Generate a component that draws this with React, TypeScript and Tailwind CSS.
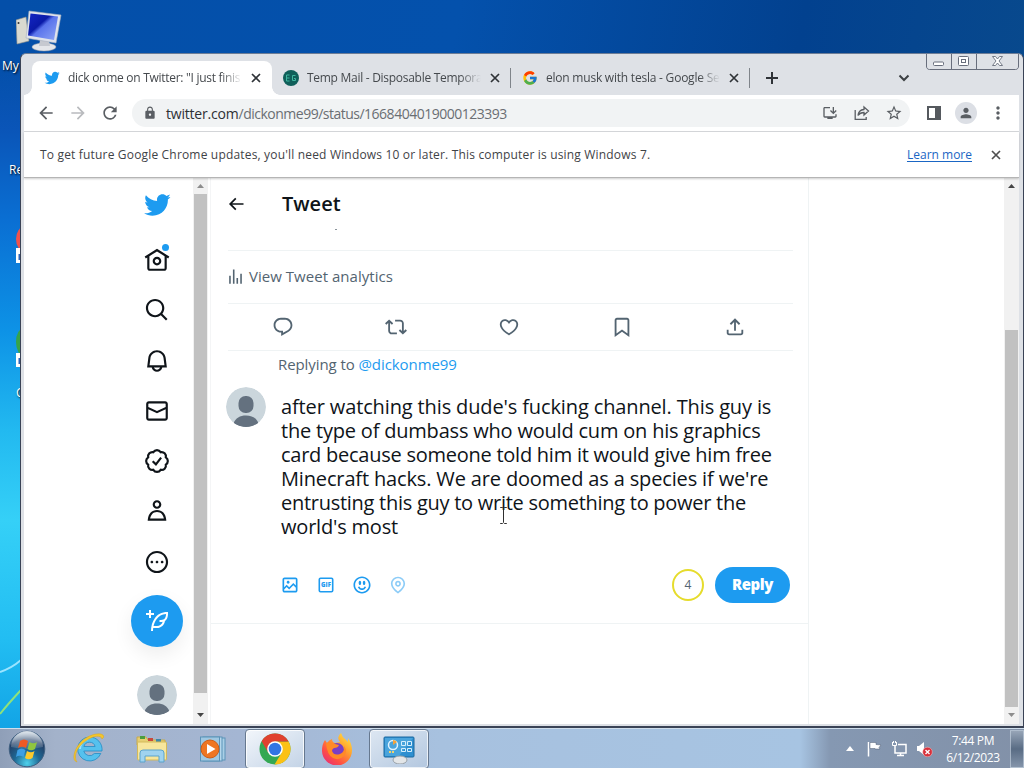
import React from "react";
import {
  MdArrowBack,
  MdArrowForward,
  MdRefresh,
  MdLock,
  MdInstallDesktop,
  MdStarBorder,
  MdPerson,
  MdMoreVert,
} from "react-icons/md";
import { FcGoogle } from "react-icons/fc";

const P = {
  bird: "M23.643 4.937c-.835.37-1.732.62-2.675.733.962-.576 1.7-1.49 2.048-2.578-.9.534-1.897.922-2.958 1.13-.85-.904-2.06-1.47-3.4-1.47-2.572 0-4.658 2.086-4.658 4.66 0 .364.042.718.12 1.06-3.873-.195-7.304-2.05-9.602-4.868-.4.69-.63 1.49-.63 2.342 0 1.616.823 3.043 2.072 3.878-.764-.025-1.482-.234-2.11-.583v.06c0 2.257 1.605 4.14 3.737 4.568-.392.106-.803.162-1.227.162-.3 0-.593-.028-.877-.082.593 1.85 2.313 3.198 4.352 3.234-1.595 1.25-3.604 1.995-5.786 1.995-.376 0-.747-.022-1.112-.065 2.062 1.323 4.51 2.093 7.14 2.093 8.57 0 13.255-7.098 13.255-13.254 0-.2-.005-.402-.014-.602.91-.658 1.7-1.477 2.323-2.41z",
  home: "M12 9c-2.209 0-4 1.791-4 4s1.791 4 4 4 4-1.791 4-4-1.791-4-4-4zm0 6c-1.105 0-2-.895-2-2s.895-2 2-2 2 .895 2 2-.895 2-2 2zm0-13.304L.622 8.807l1.06 1.696L3 9.679V19.5C3 20.881 4.119 22 5.5 22h13c1.381 0 2.5-1.119 2.5-2.5V9.679l1.318.824 1.06-1.696L12 1.696zM19 19.5c0 .276-.224.5-.5.5h-13c-.276 0-.5-.224-.5-.5V8.429l7-4.375 7 4.375V19.5z",
  search: "M10.25 3.75c-3.59 0-6.5 2.91-6.5 6.5s2.91 6.5 6.5 6.5c1.795 0 3.419-.726 4.596-1.904 1.178-1.177 1.904-2.801 1.904-4.596 0-3.59-2.91-6.5-6.5-6.5zm-8.5 6.5c0-4.694 3.806-8.5 8.5-8.5s8.5 3.806 8.5 8.5c0 1.986-.682 3.815-1.824 5.262l4.781 4.781-1.414 1.414-4.781-4.781c-1.447 1.142-3.276 1.824-5.262 1.824-4.694 0-8.5-3.806-8.5-8.5z",
  bell: "M19.993 9.042C19.48 5.017 16.054 2 11.996 2s-7.49 3.021-7.999 7.051L2.866 18H7.1c.463 2.282 2.481 4 4.9 4s4.437-1.718 4.9-4h4.236l-1.143-8.958zM12 20c-1.306 0-2.417-.835-2.829-2h5.658c-.412 1.165-1.523 2-2.829 2zm-6.866-4l.847-6.698C6.364 6.272 8.941 4 11.996 4s5.627 2.268 6.013 5.295L18.864 16H5.134z",
  mail: "M1.998 5.5c0-1.381 1.119-2.5 2.5-2.5h15c1.381 0 2.5 1.119 2.5 2.5v13c0 1.381-1.119 2.5-2.5 2.5h-15c-1.381 0-2.5-1.119-2.5-2.5v-13zm2.5-.5c-.276 0-.5.224-.5.5v2.764l8 3.638 8-3.636V5.5c0-.276-.224-.5-.5-.5h-15zm15.5 5.463l-8 3.636-8-3.638V18.5c0 .276.224.5.5.5h15c.276 0 .5-.224.5-.5v-8.037z",
  person: "M5.651 19h12.698c-.337-1.8-1.023-3.21-1.945-4.19C15.318 13.65 13.838 13 12 13s-3.317.65-4.404 1.81c-.922.98-1.608 2.39-1.945 4.19zm.486-5.56C7.627 11.85 9.648 11 12 11s4.373.85 5.863 2.44c1.477 1.58 2.366 3.8 2.632 6.46l.11 1.1H3.395l.11-1.1c.266-2.66 1.155-4.88 2.632-6.46zM12 4c-1.105 0-2 .9-2 2s.895 2 2 2 2-.9 2-2-.895-2-2-2zM8 6c0-2.21 1.791-4 4-4s4 1.79 4 4-1.791 4-4 4-4-1.79-4-4z",
  more: "M3.75 12c0-4.56 3.69-8.25 8.25-8.25s8.25 3.69 8.25 8.25-3.69 8.25-8.25 8.25S3.75 16.56 3.75 12zM12 1.75C6.34 1.75 1.75 6.34 1.75 12S6.34 22.25 12 22.25 22.25 17.66 22.25 12 17.66 1.75 12 1.75zm-4.75 11.5c.69 0 1.25-.56 1.25-1.25s-.56-1.25-1.25-1.25S6 11.31 6 12s.56 1.25 1.25 1.25zm9.5 0c.69 0 1.25-.56 1.25-1.25s-.56-1.25-1.25-1.25-1.25.56-1.25 1.25.56 1.25 1.25 1.25zM13.25 12c0 .69-.56 1.25-1.25 1.25s-1.25-.56-1.25-1.25.56-1.25 1.25-1.25 1.25.56 1.25 1.25z",
  compose: "M23 3c-6.62-.1-10.38 2.421-13.05 6.03C7.29 12.61 6 17.331 6 22h2c0-1.007.07-2.012.19-3H12c4.1 0 7.48-3.082 7.94-7.054C22.79 10.147 23.17 6.359 23 3zm-7 8h-1.5v2H16c.63-.016 1.2-.08 1.72-.188C16.95 15.24 14.68 17 12 17H8.55c.57-2.512 1.57-4.851 3-6.78 2.16-2.912 5.29-4.911 9.45-5.187C20.95 8.079 19.9 11 16 11zM4 9V6H1V4h3V1h2v3h3v2H6v3H4z",
  reply: "M1.751 10c0-4.42 3.584-8 8.005-8h4.366c4.49 0 8.129 3.64 8.129 8.13 0 2.96-1.607 5.68-4.196 7.11l-8.054 4.46v-3.69h-.067c-4.49.1-8.183-3.51-8.183-8.01zm8.005-6c-3.317 0-6.005 2.69-6.005 6 0 3.37 2.77 6.08 6.138 6.01l.351-.01h1.761v2.3l5.087-2.81c1.951-1.08 3.163-3.13 3.163-5.36 0-3.39-2.744-6.13-6.129-6.13H9.756z",
  retweet: "M4.5 3.88l4.432 4.14-1.364 1.46L5.5 7.55V16c0 1.1.896 2 2 2H13v2H7.5c-2.209 0-4-1.79-4-4V7.55L1.432 9.48.068 8.02 4.5 3.88zM16.5 6H11V4h5.5c2.209 0 4 1.79 4 4v8.45l2.068-1.93 1.364 1.46-4.432 4.14-4.432-4.14 1.364-1.46 2.068 1.93V8c0-1.1-.896-2-2-2z",
  like: "M16.697 5.5c-1.222-.06-2.679.51-3.89 2.16l-.805 1.09-.806-1.09C9.984 6.01 8.526 5.44 7.304 5.5c-1.243.07-2.349.78-2.91 1.91-.552 1.12-.633 2.78.479 4.82 1.074 1.97 3.257 4.27 7.129 6.61 3.87-2.34 6.052-4.64 7.126-6.61 1.111-2.04 1.03-3.7.477-4.82-.561-1.13-1.666-1.84-2.908-1.91zm4.187 7.69c-1.351 2.48-4.001 5.12-8.379 7.67l-.503.3-.504-.3c-4.379-2.55-7.029-5.19-8.382-7.67-1.36-2.5-1.41-4.86-.514-6.67.887-1.79 2.647-2.91 4.601-3.01 1.651-.09 3.368.56 4.798 2.01 1.429-1.45 3.146-2.1 4.796-2.01 1.954.1 3.714 1.22 4.601 3.01.896 1.81.846 4.17-.514 6.67z",
  bookmark: "M4 4.5C4 3.12 5.119 2 6.5 2h11C18.881 2 20 3.12 20 4.5v18.44l-8-5.71-8 5.71V4.5zM6.5 4c-.276 0-.5.22-.5.5v14.56l6-4.29 6 4.29V4.5c0-.28-.224-.5-.5-.5h-11z",
  share: "M12 2.59l5.7 5.7-1.41 1.42L13 6.41V16h-2V6.41l-3.3 3.3-1.41-1.42L12 2.59zM21 15l-.02 3.51c0 1.38-1.12 2.49-2.5 2.49H5.5C4.11 21 3 19.88 3 18.5V15h2v3.5c0 .28.22.5.5.5h12.98c.28 0 .5-.22.5-.5L19 15h2z",
  back: "M7.414 13l5.043 5.04-1.414 1.42L3.586 12l7.457-7.46 1.414 1.42L7.414 11H21v2H7.414z",
  analytics: "M8.75 21V3h2v18h-2zM18 21V8.5h2V21h-2zM4 21l.004-10h2L6 21H4zm9.248 0v-7h2v7h-2z",
  media: "M3 5.5C3 4.119 4.119 3 5.5 3h13C19.881 3 21 4.119 21 5.5v13c0 1.381-1.119 2.5-2.5 2.5h-13C4.119 21 3 19.881 3 18.5v-13zM5.5 5c-.276 0-.5.224-.5.5v9.086l3-3 3 3 5-5 3 3V5.5c0-.276-.224-.5-.5-.5h-13zM19 15.414l-3-3-5 5-3-3-3 3V18.5c0 .276.224.5.5.5h13c.276 0 .5-.224.5-.5v-3.086zM9.75 7C8.784 7 8 7.784 8 8.75s.784 1.75 1.75 1.75 1.75-.784 1.75-1.75S10.716 7 9.75 7z",
  emoji: "M8 9.5C8 8.119 8.672 7 9.5 7S11 8.119 11 9.5 10.328 12 9.5 12 8 10.881 8 9.5zm6.5 2.5c.828 0 1.5-1.119 1.5-2.5S15.328 7 14.5 7 13 8.119 13 9.5s.672 2.5 1.5 2.5zM12 16c-2.224 0-3.021-2.227-3.051-2.316l-1.897.633c.05.15 1.271 3.684 4.949 3.684s4.898-3.533 4.949-3.684l-1.896-.638c-.033.095-.83 2.322-3.053 2.322zm10.25-4.001c0 5.652-4.598 10.25-10.25 10.25S1.75 17.652 1.75 12 6.348 1.75 12 1.75 22.25 6.348 22.25 12zm-2 0c0-4.549-3.701-8.25-8.25-8.25S3.75 7.451 3.75 12s3.701 8.25 8.25 8.25 8.25-3.701 8.25-8.25z",
  location: "M12 7c-1.93 0-3.5 1.57-3.5 3.5S10.07 14 12 14s3.5-1.57 3.5-3.5S13.93 7 12 7zm0 5c-.827 0-1.5-.673-1.5-1.5S11.173 9 12 9s1.5.673 1.5 1.5S12.827 12 12 12zm0-10c-4.687 0-8.5 3.813-8.5 8.5 0 5.967 7.621 11.116 7.945 11.332l.555.37.555-.37c.324-.216 7.945-5.365 7.945-11.332C20.5 5.813 16.687 2 12 2zm0 17.77c-1.665-1.241-6.5-5.196-6.5-9.27C5.5 6.916 8.416 4 12 4s6.5 2.916 6.5 6.5c0 4.073-4.835 8.028-6.5 9.27z",
};

const segoe = "font-['Open_Sans','Noto_Sans',sans-serif]";

function Glyph({ d, className }: { d: string; className: string }) {
  return (
    <svg viewBox="0 0 24 24" fill="currentColor" className={className}>
      <path d={d} />
    </svg>
  );
}

function Cross({ className }: { className: string }) {
  return (
    <svg viewBox="0 0 14 14" fill="none" stroke="currentColor" strokeWidth="1.700" className={className}>
      <path d="M3 3l8 8M11 3l-8 8" />
    </svg>
  );
}

function Avatar() {
  return (
    <svg viewBox="0 0 40 40" className="size-10 shrink-0 rounded-full">
      <circle cx="20" cy="20" r="20" fill="#cbd6dc" />
      <rect x="12.5" y="9" width="15" height="17" rx="7" fill="#64717f" />
      <path d="M7.5 36.5C9.500 31 14 28.500 20 28.500s10.500 2.500 12.500 8A20 20 0 0 1 20 40a20 20 0 0 1-12.500-3.500z" fill="#64717f" />
    </svg>
  );
}

function Tab({ icon, title, active, titleClass }: { icon: React.ReactNode; title: string; active?: boolean; titleClass: string }) {
  return (
    <div className={active ? "relative flex h-[34px] w-[240px] items-center rounded-t-lg bg-white pl-3" : "flex h-[34px] w-[239px] items-center pl-[11px]"}>
      {icon}
      <div className={"ml-2 h-5 w-[174px] overflow-hidden text-[12px] leading-5 whitespace-nowrap text-[#45494d] [mask-image:linear-gradient(to_right,black_88%,transparent_100%)] " + titleClass}>{title}</div>
      <Cross className="ml-[7px] size-[14px] text-[#2f3337]" />
      {active && (
        <>
          <div className="absolute bottom-0 -left-2 size-2 bg-[radial-gradient(circle_at_top_left,transparent_7.500px,white_8px)]" />
          <div className="absolute right-[-8px] bottom-0 size-2 bg-[radial-gradient(circle_at_top_right,transparent_7.500px,white_8px)]" />
        </>
      )}
    </div>
  );
}

function CaptionButtons() {
  return (
    <svg viewBox="0 0 93 17" className="absolute top-[-1px] right-1 h-[17px] w-[93px]" fill="none" stroke="#686e7c">
      <path d="M.5 0v13a3 3 0 0 0 3 3.500h86a3 3 0 0 0 3-3.500V0M25.500 0v16M50.500 0v16" />
      <rect x="7.500" y="9" width="10" height="3.500" rx="1" fill="#fff" />
      <rect x="32.500" y="3.500" width="10" height="9" rx="1" fill="#fff" />
      <rect x="35.500" y="6.500" width="4" height="3" />
      <path d="M66.500 3.500h3l2 2.500 2-2.500h3l-3.500 4.500 3.500 4.500h-3l-2-2.500-2 2.500h-3l3.500-4.500z" fill="#fff" strokeWidth=".9" />
    </svg>
  );
}

function Arrow({ up, dim }: { up?: boolean; dim?: boolean }) {
  return (
    <svg viewBox="0 0 7 4" className="h-1 w-[7px]">
      <path d={up ? "M0 4L3.500 0 7 4z" : "M0 0h7L3.500 4z"} fill={dim ? "#8d8d8d" : "#454545"} />
    </svg>
  );
}

function NavItem({ children }: { children: React.ReactNode }) {
  return <div className="relative flex h-[50.25px] w-[53px] items-center justify-center pr-px">{children}</div>;
}

function Sidebar() {
  return (
    <nav className="flex w-[169px] shrink-0 flex-col items-end pr-[9.5px] text-[#0f1419]">
      <div className="flex h-[57px] w-[53px] items-center justify-center pb-1">
        <Glyph d={P.bird} className="size-7 text-[#1d9bf0]" />
      </div>
      <NavItem>
        <Glyph d={P.home} className="size-[26px]" />
        <span className="absolute top-[9px] right-[15px] size-[7px] rounded-full bg-[#1d9bf0]" />
      </NavItem>
      <NavItem><Glyph d={P.search} className="size-[26px]" /></NavItem>
      <NavItem><Glyph d={P.bell} className="size-[26px]" /></NavItem>
      <NavItem><Glyph d={P.mail} className="size-[26px]" /></NavItem>
      <NavItem>
        <svg viewBox="0 0 24 24" className="size-[26px]" fill="none" stroke="currentColor" strokeWidth="2">
          <path d="M3.850 8.620a4 4 0 0 1 4.780-4.770 4 4 0 0 1 6.740 0 4 4 0 0 1 4.780 4.780 4 4 0 0 1 0 6.740 4 4 0 0 1-4.770 4.780 4 4 0 0 1-6.750 0 4 4 0 0 1-4.780-4.770 4 4 0 0 1 0-6.760z" />
          <path d="M8 12.200l3 2.900 4.800-6.200" />
        </svg>
      </NavItem>
      <NavItem><Glyph d={P.person} className="size-[26px]" /></NavItem>
      <NavItem><Glyph d={P.more} className="size-[26px]" /></NavItem>
      <div className="mt-2 mr-[0.5px] flex size-[52px] items-center justify-center rounded-full bg-[#1d9bf0] text-white shadow-[0_8px_20px_rgba(0,0,0,0.07)]">
        <Glyph d={P.compose} className="size-6" />
      </div>
      <div className="mt-7 mr-[0.5px] flex w-[53px] justify-center"><Avatar /></div>
    </nav>
  );
}

function TweetColumn() {
  return (
    <section className="flex w-[598px] shrink-0 flex-col border-r border-[#eff3f4] text-[#536471]">
      <header className="flex h-[51px] items-center pl-[15px] text-[#0f1419]">
        <Glyph d={P.back} className="size-5" />
        <h1 className="ml-[36px] text-[20px] leading-6 font-semibold">Tweet</h1>
      </header>
      <div className="ml-[124px] h-px w-0.5 bg-[#8a949b]" />
      <div className="mt-5 mr-[15px] ml-[17px] flex h-[54px] items-center border-t border-b border-[#eff3f4] pb-0.5">
        <Glyph d={P.analytics} className="-ml-0.5 size-[19px]" />
        <span className="ml-1 text-[15px] tracking-[0.03px]">View Tweet analytics</span>
      </div>
      <div className="mr-[15px] ml-[17px] flex h-[47px] items-center border-b border-[#eff3f4]">
        <div className="-ml-0.5 flex w-full shrink-0 items-center justify-around">
          <Glyph d={P.reply} className="size-[22px]" />
          <Glyph d={P.retweet} className="size-[22px]" />
          <Glyph d={P.like} className="size-[22px]" />
          <Glyph d={P.bookmark} className="size-[22px]" />
          <Glyph d={P.share} className="size-[22px]" />
        </div>
      </div>
      <p className="mt-[3px] ml-[67px] text-[15px] leading-5 tracking-[-0.08px]">
        Replying to <span className="text-[#1d9bf0]">@dickonme99</span>
      </p>
      <div className="mt-[13px] ml-[15px] flex">
        <Avatar />
        <div className="mt-2 ml-[15px] text-[20px] leading-6 whitespace-nowrap text-[#0f1419]">
          <div className="tracking-[-0.13px]">after watching this dude's fucking channel. This guy is</div>
          <div className="tracking-[-0.2px]">the type of dumbass who would cum on his graphics</div>
          <div className="tracking-[-0.25px]">card because someone told him it would give him free</div>
          <div className="tracking-[-0.15px]">Minecraft hacks. We are doomed as a species if we're</div>
          <div className="tracking-[-0.27px]">entrusting this guy to write something to power the</div>
          <div className="tracking-[-0.2px]">world's most</div>
        </div>
      </div>
      <div className="mt-[28px] flex h-9 items-center pr-[18px] pl-[69px] text-[#1d9bf0]">
        <div className="flex gap-4">
          <Glyph d={P.media} className="size-5" />
          <svg viewBox="0 0 20 20" className="size-5">
            <rect x="3.300" y="3.300" width="13.400" height="13.400" rx="1.200" fill="none" stroke="currentColor" strokeWidth="1.600" />
            <text x="10" y="12.200" textAnchor="middle" fontSize="6" fontWeight="800" fill="currentColor">GIF</text>
          </svg>
          <Glyph d={P.emoji} className="size-5" />
          <Glyph d={P.location} className="size-5 opacity-50" />
        </div>
        <div className="ml-auto flex size-8 items-center justify-center rounded-full border-2 border-[#e6dc2c] text-[12px] text-[#536471]">4</div>
        <button className="ml-[11px] h-9 w-[75px] rounded-full bg-[#1d9bf0] pb-0.5 text-[15px] font-extrabold tracking-[-0.4px] text-white">Reply</button>
      </div>
      <div className="mt-5 border-t border-[#eff3f4]" />
    </section>
  );
}

function TaskIcons() {
  return (
    <div className="flex items-center">
      <div className="flex w-[54px] justify-center">
        <svg viewBox="0 0 38 38" className="size-[38px]">
          <defs>
            <radialGradient id="orb" cx=".5" cy=".9" r=".9"><stop offset="0" stopColor="#4ed1ec" /><stop offset=".4" stopColor="#1e6894" /><stop offset=".75" stopColor="#233f66" /><stop offset="1" stopColor="#8ba7bf" /></radialGradient>
            <linearGradient id="shine" x2="0" y2="1"><stop offset="0" stopColor="#fff" stopOpacity=".75" /><stop offset="1" stopColor="#fff" stopOpacity=".1" /></linearGradient>
          </defs>
          <circle cx="19" cy="19" r="17.800" fill="url(#orb)" stroke="#3f5f80" />
          <path d="M3 17A16 16 0 0 1 35 17Q19 21 3 17z" fill="url(#shine)" />
          <path d="M12 11q4-3 8 0l-2 7q-4-2.500-8 0z" fill="#ee5a24" />
          <path d="M21.500 12q4 2.500 7.500 0l-2 7q-4 2.500-7.500 0z" fill="#8fc63f" />
          <path d="M9.500 20q4-3 8 0l-2 7q-4-2.500-7.500 0z" fill="#3d9fe4" />
          <path d="M19 21q4 2.500 7.500 0l-2 7q-4 2.500-7.500 0z" fill="#fcc92c" />
        </svg>
      </div>
      <div className="ml-[19px] flex w-8 justify-center">
        <svg viewBox="0 0 32 32" className="size-8">
          <path d="M16.500 4a12 12 0 1 0 11.300 16.500h-6.500a6 6 0 0 1-10.500-2.500H29A12.500 12.500 0 0 0 16.500 4zm-5.600 9.500a5.800 5.800 0 0 1 11.200 0z" fill="#55c1ee" stroke="#238bc4" strokeWidth=".8" />
          <path d="M15 6a10 10 0 0 0-8 10" fill="none" stroke="#9be2fa" strokeWidth="2" />
          <path d="M29 6C28 1 18 3 10 10S1 25 4 29C-1 28 0 18 7 10S26-1 30 2q2 2-1 4z" fill="#f4c62d" stroke="#d8a51c" strokeWidth=".5" />
        </svg>
      </div>
      <div className="ml-[31px] flex w-8 justify-center">
        <svg viewBox="0 0 32 32" className="size-8">
          <path d="M1 4h9l2 3h17v5H1z" fill="#e6cf72" stroke="#c7aa4d" />
          <path d="M4 3h5v3H4z" fill="#4b9d3f" /><path d="M12 5h5v3h-5z" fill="#c9483a" /><path d="M20 6h5v3h-5z" fill="#3d87a8" />
          <rect x="1.500" y="9" width="29" height="18" rx="1" fill="#f7e69c" stroke="#d3b95a" />
          <path d="M4 29V20q0-3 3-3h18q3 0 3 3v9h-5v-6H9v6z" fill="#9fd3ef" stroke="#5ba3cc" />
        </svg>
      </div>
      <div className="ml-[29px] flex w-8 justify-center">
        <svg viewBox="0 0 32 32" className="size-8">
          <rect x="9" y="5" width="19" height="22" fill="#a9cfe6" stroke="#5b93b8" />
          <rect x="6" y="4" width="19" height="24" fill="#b6d8ec" stroke="#5b93b8" />
          <rect x="3.500" y="4" width="19" height="24" fill="#9fc8e2" stroke="#5b93b8" />
          <circle cx="13" cy="16" r="9" fill="#ee7623" stroke="#cf5c14" />
          <path d="M10 11l8.500 5-8.500 5z" fill="#fff" />
        </svg>
      </div>
      <div className="ml-4 flex h-10 w-[60px] items-center justify-center rounded-sm border border-[#66788f] bg-linear-to-br from-[#f2f6fb] to-[#c3d3e6] shadow-[inset_0_0_0_1px_rgba(255,255,255,0.8)]">
        <svg viewBox="0 0 32 32" className="size-8">
          <circle cx="16" cy="16" r="15.500" fill="#34a853" />
          <path d="M16 8.500h13.600A15.500 15.500 0 0 1 15.500 31.500L22.500 20z" fill="#fbc116" />
          <path d="M2.600 8.200A15.500 15.500 0 0 1 29.600 8.500H16L9.500 20z" fill="#e0412f" />
          <circle cx="16" cy="16" r="7.800" fill="#fff" />
          <circle cx="16" cy="16" r="6.300" fill="#3275e4" />
        </svg>
      </div>
      <div className="ml-4 flex w-8 justify-center">
        <svg viewBox="0 0 32 32" className="size-8">
          <defs>
            <linearGradient id="fox" x1="1" x2=".2" y2="1"><stop offset="0" stopColor="#fff04d" /><stop offset=".4" stopColor="#ffa42e" /><stop offset=".75" stopColor="#ff5044" /><stop offset="1" stopColor="#e82f75" /></linearGradient>
          </defs>
          <path d="M4 7l2 3q2-3 5-4 0 3 3 4l5-1q-4-5 1-9 1 4 5 7l2 2V5q4 6 4 12a15 15 0 0 1-30 1Q1 11 4 7z" fill="url(#fox)" />
          <circle cx="16" cy="17" r="7" fill="#7a3fc4" />
          <path d="M5 10q6-2 9 1l4 1q-1 3-5 3-2 1-2 3 2 5 8 3 5-2 4-8 4 5 0 10-5 5-11 2T5 10z" fill="#ff8a26" />
        </svg>
      </div>
      <div className="ml-4 flex h-10 w-[60px] items-center justify-center rounded-sm border border-[#66788f] bg-linear-to-br from-[#dde7f2] to-[#b3c7df] shadow-[inset_0_0_0_1px_rgba(255,255,255,0.7)]">
        <svg viewBox="0 0 34 30" className="h-[30px] w-[34px]">
          <rect x="2" y="3" width="30" height="20" rx="1" fill="#2e8fd0" stroke="#1b699f" />
          <path d="M3 4h28L17 22H3z" fill="#63b9e8" opacity=".5" />
          <circle cx="11" cy="11" r="4.500" fill="none" stroke="#dff2ff" strokeWidth="1.500" />
          <path d="M11 11V6a5 5 0 0 1 4 2z" fill="#f5a33a" />
          <path d="M19.500 7.500h4v4h-4zM25.500 7.500h4v4h-4zM19.500 14.500h4v3h-4zM25.500 14.500h4v3h-4z" fill="none" stroke="#d4eefc" />
          <path d="M7 18h6" stroke="#f1d36b" strokeWidth="2" strokeDasharray="2 1" />
          <ellipse cx="18" cy="26" rx="7" ry="4" fill="#e3e6e8" stroke="#99a1a8" />
        </svg>
      </div>
    </div>
  );
}

function Taskbar() {
  return (
    <footer className={"relative flex h-10 items-center border-t border-[#cfdeec] bg-[linear-gradient(to_right,#8f9fb8_0px,#a3b2ca_55px,#a4b6d3_240px,#a7c1df_440px,#a7c4e2_800px,#8598b2_830px,#8291a8_1024px)] " + segoe}>
      <TaskIcons />
      <div className="ml-auto flex items-center text-white">
        <svg viewBox="0 0 8 5" className="h-[5px] w-2"><path d="M0 5l4-5 4 5z" fill="#fff" /></svg>
        <svg viewBox="0 0 16 16" className="ml-[13px] size-4">
          <path d="M1.500 1v14.500" stroke="#fff" strokeWidth="1.500" /><path d="M3 1.500h6v2l5 .5-2 2.500 1 1.500H8V7.500H3z" fill="#fff" stroke="#505e74" strokeWidth=".5" />
        </svg>
        <svg viewBox="0 0 16 16" className="ml-2 size-4" fill="none" stroke="#fff">
          <path d="M4 4.500V12h11V3.500H7M9.500 12v2.500M6 14.500h7" strokeWidth="1.500" /><path d="M1.500 1v3.500h4V1M2.500 0v2M4.500 0v2" />
        </svg>
        <svg viewBox="0 0 17 16" className="ml-[9px] h-4 w-[17px]">
          <path d="M1 5h2l5-4v13L3 10H1z" fill="#fff" /><circle cx="11.500" cy="11" r="4.800" fill="#d8303a" stroke="#f6c8ca" strokeWidth=".5" /><path d="M9.500 9l4 4m0-4l-4 4" stroke="#fff" strokeWidth="1.400" />
        </svg>
        <div className="ml-[9px] w-[62px] text-center text-[12px] leading-[17px] tracking-[-0.36px] whitespace-nowrap">
          <div>7:44 PM</div>
          <div>6/12/2023</div>
        </div>
        <div className="ml-[6px] h-[38px] w-[14px] border border-[#c1cddb]/70 bg-linear-to-b from-[#97a5b7] via-[#596c84] to-[#8494aa]" />
      </div>
    </footer>
  );
}

function DesktopIcons() {
  return (
    <div className={"absolute inset-0 text-[12px] text-white [text-shadow:1px_1px_2px_#000] " + segoe}>
      <svg viewBox="0 0 46 42" className="absolute top-[10px] left-4 h-[42px] w-[46px]">
        <defs><linearGradient id="mon" x2="1" y2="1"><stop offset="0" stopColor="#1426c4" /><stop offset=".4" stopColor="#0a1aa8" /><stop offset=".5" stopColor="#5a74ec" /><stop offset="1" stopColor="#8fa6f6" /></linearGradient></defs>
        <path d="M0 10l10-3 3 24-12 3z" fill="#d9d9d0" stroke="#8f8f88" strokeWidth=".6" />
        <circle cx="2.500" cy="13" r="1" fill="#333" />
        <ellipse cx="28" cy="37" rx="12" ry="4" fill="#e4e6ea" stroke="#9aa0a8" strokeWidth=".5" />
        <path d="M24 30h9l1 6h-11z" fill="#c6c9d0" />
        <path d="M13 1l32 4-5 28-30-5z" fill="#dfe3ec" stroke="#a8b0bd" strokeWidth=".6" />
        <path d="M14.500 3.500l27.500 3-4 23.500-26-4.500z" fill="url(#mon)" />
      </svg>
      <div className="absolute top-[57px] left-[2px]">My</div>
      <div className="absolute top-[161px] left-[9px]">Re</div>
      <svg viewBox="0 0 10 175" className="absolute top-[225px] left-3 h-[175px] w-[10px]">
        <ellipse cx="12" cy="14" rx="8" ry="12" fill="#f0524d" />
        <rect x="4" y="23" width="6" height="15" fill="#fff" /><rect x="6.500" y="29" width="3.500" height="6" fill="#2c64b8" />
        <ellipse cx="12" cy="117" rx="8" ry="14" fill="#36a34a" />
        <rect x="4" y="128" width="6" height="14" fill="#fff" /><rect x="6.500" y="133" width="3.500" height="6" fill="#2c64b8" />
      </svg>
      <div className="absolute top-[384px] left-4">C</div>
      <svg viewBox="0 0 21 80" className="absolute bottom-0 left-0 h-20 w-[21px]" fill="none">
        <path d="M0 24Q12 20 21 12" stroke="#9be4ff" strokeWidth="2" />
        <path d="M0 66Q8 56 21 42" stroke="#8fe27a" strokeWidth="2" />
      </svg>
    </div>
  );
}

export default function App() {
  return (
    <div className="flex h-[768px] w-[1024px] flex-col overflow-hidden bg-[#3a4356] font-['Open_Sans','Noto_Sans',sans-serif]">
      <div className="relative h-[728px] bg-[linear-gradient(to_bottom,transparent_60px,#0a55b8_130px,#0a6fd3_220px,#0d92e6_330px,#22b9f0_430px,#35d0f7_520px,#22bdf2_640px,#12a4e6_728px),linear-gradient(100deg,#044fa9_0%,#0451ac_40%,#02418f_70%,#0b4d8c_100%)]">
        <DesktopIcons />
        <main className="absolute top-[53px] left-[20px] flex h-[675px] w-[1004px] flex-col overflow-hidden rounded-t-md border border-b-2 border-[#3a4356] border-t-[#6d7d96] bg-[#dee1e6]">
          <div className="relative flex h-[41px] shrink-0 items-end pl-[11px]">
            <Tab active title={'dick onme on Twitter: "I just finis'} titleClass="tracking-[-0.28px]" icon={<Glyph d={P.bird} className="size-4 text-[#1d9bf0]" />} />
            <Tab title="Temp Mail - Disposable Tempora" titleClass="tracking-[-0.28px]" icon={
              <svg viewBox="0 0 16 16" className="size-4"><circle cx="8" cy="8" r="8" fill="#0f5f5a" /><path d="M6.500 5h-3v6h3M3.500 8h3M12.500 5.500h-3v5h3v-2h-1.500" fill="none" stroke="#3fb79f" /></svg>
            } />
            <div className="mb-[7px] -ml-px h-5 w-px bg-[#7f848a]" />
            <Tab title="elon musk with tesla - Google Se" titleClass="tracking-[-0.22px]" icon={<FcGoogle className="size-4" />} />
            <div className="mb-[7px] -ml-px h-5 w-px bg-[#7f848a]" />
            <svg viewBox="0 0 18 18" className="mb-2 ml-[13px] size-[18px]" fill="none" stroke="#2f3337" strokeWidth="2"><path d="M9 3v12M3 9h12" /></svg>
            <svg viewBox="0 0 12 8" className="mb-[13px] ml-[117px] h-2 w-3" fill="none" stroke="#3c4043" strokeWidth="2"><path d="M1.500 1.500L6 6l4.500-4.500" /></svg>
            <CaptionButtons />
          </div>
          <div className="mr-1 ml-[3px] flex h-[37px] shrink-0 items-center border-b border-[#d6d8db] bg-white pl-3 text-[#5a5e63]">
            <MdArrowBack className="size-5" />
            <MdArrowForward className="ml-3 size-5 text-[#b9bbbe]" />
            <MdRefresh className="ml-3 size-5" />
            <div className="ml-3 flex h-7 w-[778px] shrink-0 items-center rounded-full bg-[#f1f3f4] pr-[7px] pl-[11px]">
              <MdLock className="size-[14px]" />
              <span className="ml-[9px] text-[14px] tracking-[-0.5px] text-[#6a6e73]"><span className="tracking-[-0.2px] text-[#2d3034]">twitter.com</span>/dickonme99/status/1668404019000123393</span>
              <MdInstallDesktop className="ml-auto size-4" />
              <svg viewBox="0 0 16 16" className="ml-4 size-4" fill="none" stroke="currentColor" strokeWidth="1.300"><path d="M1.200 5v9.300h11V12M10 2l4.500 4-4.500 4V7.500q-4 0-6 3 .5-5.500 6-6z" /></svg>
              <MdStarBorder className="ml-[15px] size-[18px]" />
            </div>
            <svg viewBox="0 0 14 14" className="ml-[17px] size-[14px] shrink-0"><path d="M0 0h14v14H0zM2 2v10h6V2z" fill="#55595e" fillRule="evenodd" /></svg>
            <div className="ml-[14px] flex size-[22px] shrink-0 items-center justify-center rounded-full bg-[#dcdfe5]"><MdPerson className="size-4" /></div>
            <MdMoreVert className="ml-[11px] size-5 shrink-0" />
          </div>
          <div className="relative z-10 mr-1 ml-[3px] flex h-[46px] shrink-0 items-center border-b border-[#b5b5b5] bg-white pr-[16px] pl-4 text-[12px] shadow-[0_1px_2px_rgba(0,0,0,0.2)]">
            <span className="tracking-[0.175px] whitespace-nowrap text-[#3f4347]">To get future Google Chrome updates, you'll need Windows 10 or later. This computer is using Windows 7.</span>
            <span className="ml-auto text-[#1a66c4] underline underline-offset-2">Learn more</span>
            <Cross className="ml-[17px] size-[14px] text-[#505050]" />
          </div>
          <div className="mr-1 ml-[3px] flex h-[546px] shrink-0 bg-white">
            <Sidebar />
            <div className="flex w-[15px] shrink-0 flex-col items-center bg-[#f1f1f1] pt-1.5">
              <Arrow up dim />
              <div className="mt-1.5 mb-[20px] h-[499px] w-[13px] bg-[#c1c1c1]" />
              <Arrow />
            </div>
            <div className="w-[3px] shrink-0 border-r border-[#f4f5f6]" />
            <TweetColumn />
            <div className="ml-auto flex w-[15px] shrink-0 flex-col items-center bg-[#f1f1f1] pt-1.5">
              <Arrow up />
              <div className="mt-[142px] h-[377px] w-[13px] bg-[#c1c1c1]" />
              <div className="mt-1.5"><Arrow dim /></div>
            </div>
          </div>
        </main>
        <svg viewBox="0 0 7 18" className="absolute top-[507px] left-[500px] h-[17px] w-[7px]" fill="none" stroke="#222"><path d="M0 .5h2.500l1 1 1-1H7M3.500 1v15M0 17.500h2.500l1-1 1 1H7" /></svg>
      </div>
      <Taskbar />
    </div>
  );
}
